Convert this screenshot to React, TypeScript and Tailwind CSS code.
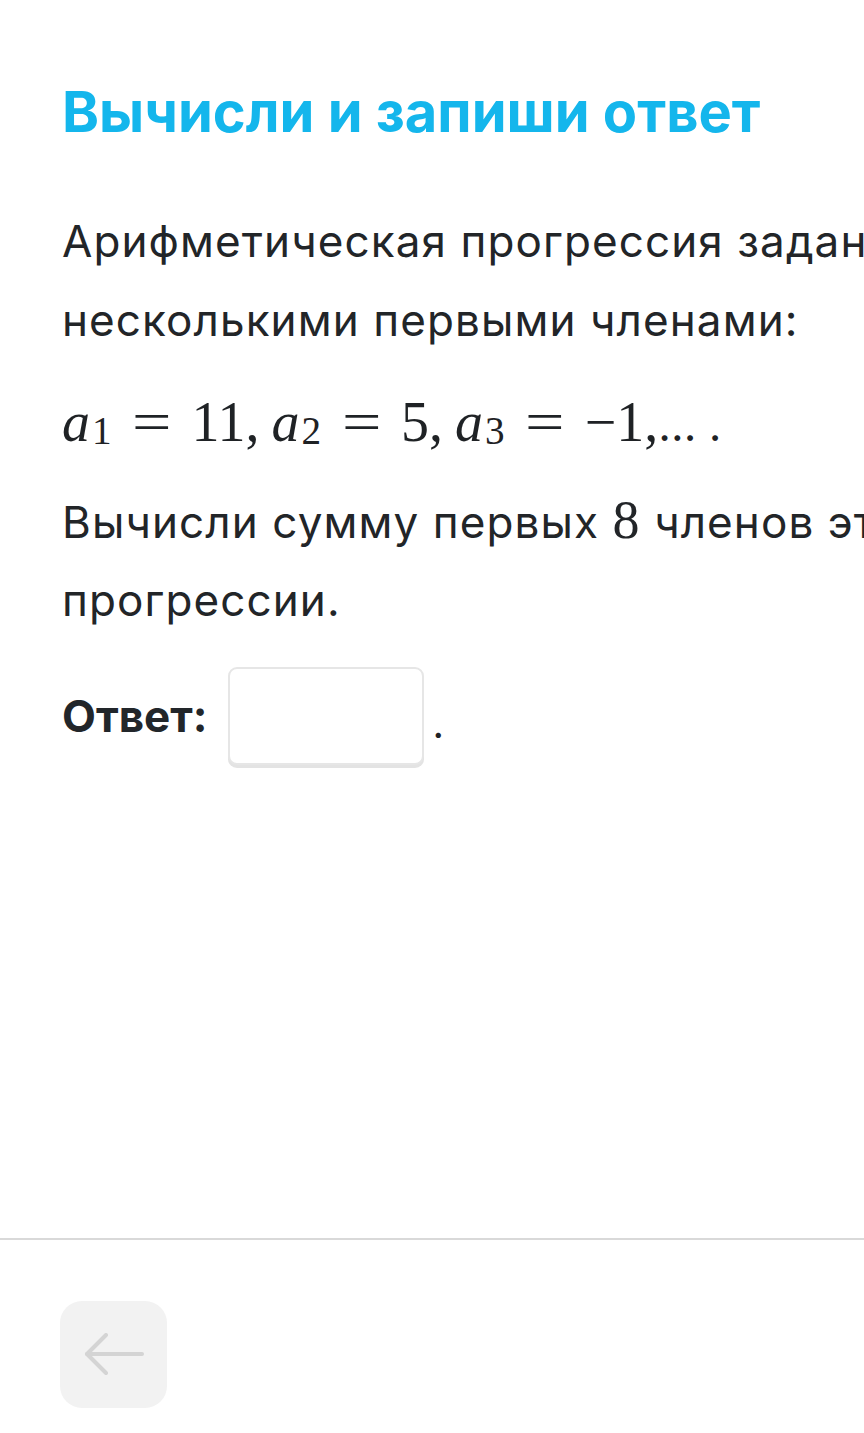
const Sub = ({ children }: { children: React.ReactNode }) => (
  <sub className="text-[0.7em] not-italic relative top-[0.08em] ml-[2px]">{children}</sub>
);

const MathVar = ({ i }: { i: string }) => (
  <span className="inline-block w-[50px]">
    <span className="italic">a</span>
    <Sub>{i}</Sub>
  </span>
);

const Eq = () => <span className="inline-block mx-[24px] scale-x-125">=</span>;

export default function App() {
  return (
    <div className="w-[864px] h-[1433px] overflow-hidden bg-white flex flex-col font-['Inter',sans-serif] text-[#1f2225]">
      <main className="w-[1000px] px-[62px] pt-[78px] flex-1">
        <h1 className="text-[56px] leading-[68px] font-bold text-[#14b6ec]">
          Вычисли и запиши ответ
        </h1>

        <div className="mt-[56px] text-[44px] leading-[79px] tracking-[1.1px] text-[#222528]">
          <p className="whitespace-nowrap">Арифметическая прогрессия задана</p>
          <p className="whitespace-nowrap">несколькими первыми членами:</p>
        </div>

        <p className="mt-[26px] text-[56px] leading-[72px] font-['Liberation_Serif',serif] whitespace-nowrap">
          <MathVar i="1" />
          <Eq />
          11,<span className="ml-[12px]" />
          <MathVar i="2" />
          <Eq />
          5,<span className="ml-[12px]" />
          <MathVar i="3" />
          <Eq />
          −1,<span className="text-[44px] font-['Inter',sans-serif]">... .</span>
        </p>

        <div className="mt-[20px] text-[44px] leading-[78px] tracking-[1.1px] text-[#222528]">
          <p className="whitespace-nowrap">
            Вычисли сумму первых <span className="font-['Liberation_Serif',serif] text-[54px]">8</span> членов этой
          </p>
          <p className="whitespace-nowrap">прогрессии.</p>
        </div>

        <div className="mt-[28px] flex items-center">
          <span className="text-[44px] font-bold text-[#22262a]">Ответ:</span>
          <input
            type="text"
            className="ml-[21px] w-[196px] h-[98px] rounded-[9px] border-2 border-[#e6e6e6] bg-white shadow-[0_3px_0_#e3e3e3] outline-none"
          />
          <span className="ml-[8px] mt-[16px] text-[40px]">.</span>
        </div>
      </main>

      <div className="h-[2px] bg-[#d9d9d9] mb-[61px]" />

      <div className="px-[60px] pb-[25px]">
        <button className="w-[107px] h-[107px] rounded-[22px] bg-[#f2f2f2] flex items-center justify-center">
          <svg width="60" height="44" viewBox="0 0 60 44" fill="none" stroke="#d4d4d4" strokeWidth="4" strokeLinecap="round" strokeLinejoin="round">
            <path d="M58 21H3" />
            <path d="M22 2L3 21L22 40" />
          </svg>
        </button>
      </div>
    </div>
  );
}
